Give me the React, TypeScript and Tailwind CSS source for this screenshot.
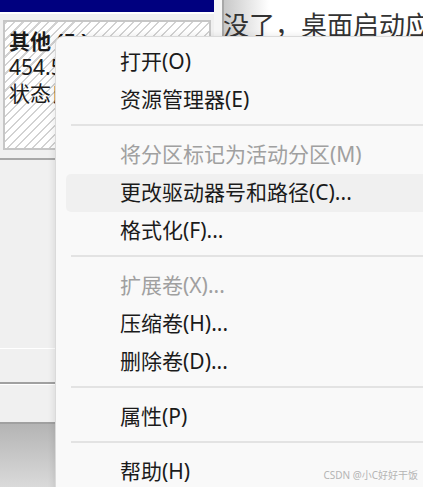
import React from "react";

type Item = { label: string; disabled?: boolean; active?: boolean } | "sep";

const items: Item[] = [
  { label: "打开(O)" },
  { label: "资源管理器(E)" },
  "sep",
  { label: "将分区标记为活动分区(M)", disabled: true },
  { label: "更改驱动器号和路径(C)...", active: true },
  { label: "格式化(F)..." },
  "sep",
  { label: "扩展卷(X)...", disabled: true },
  { label: "压缩卷(H)..." },
  { label: "删除卷(D)..." },
  "sep",
  { label: "属性(P)" },
  "sep",
  { label: "帮助(H)" },
];

const font = { fontFamily: '"Noto Sans", "Noto Sans CJK SC", sans-serif' };

export default function App() {
  return (
    <div
      className="relative flex h-[487px] w-[423px] overflow-hidden bg-[#f0f0f0] text-[#1b1b1b]"
      style={font}
    >
      {/* left pane: disk map */}
      <div className="flex w-[214px] shrink-0 flex-col">
        <div className="h-[12px] bg-[#00007f]" />
        <div className="h-[2px] bg-white" />
        <div className="px-[3px] pt-[6px]">
          <div className="h-[130px] overflow-hidden whitespace-nowrap border-2 border-[#c6c6c6] bg-[repeating-linear-gradient(135deg,#d2d2d2_0,#d2d2d2_1.5px,#ffffff_1.5px,#ffffff_6px)] px-[4px] pt-[6px] text-[21px] leading-[26px]">
            <div className="font-bold">其他 (F:)</div>
            <div>454.59 GB NTFS</div>
            <div>状态良好 (基本数据分区)</div>
          </div>
        </div>
        <div className="mt-[8px] h-[2px] bg-[#a8a8a8]" />
        <div className="h-[188px]" />
        <div className="h-px bg-white" />
        <div className="h-[33px]" />
        <div className="h-[2px] bg-[#a0a0a0]" />
        <div className="h-px bg-white" />
        <div className="h-[37px]" />
        <div className="h-[2px] bg-[#a0a0a0]" />
        <div className="flex-1 bg-[linear-gradient(180deg,#b4b4b4,#dadada)]" />
      </div>

      {/* right pane: text window behind the menu */}
      <div className="flex flex-1 flex-col">
        <div className="flex h-[40px]">
          <div className="w-[8px] bg-[#f6f6f6]" />
          <div className="w-[2px] bg-[#a8a8a8]" />
          <div className="flex-1 overflow-hidden bg-[linear-gradient(90deg,#c8c8c8,#ffffff_45px)]">
            <div
              className="-ml-[1px] whitespace-nowrap pt-[7px] text-[26px] leading-[34px] text-[#333333]"
              style={{ fontFamily: '"Noto Sans CJK SC", sans-serif' }}
            >
              没了，桌面启动应
            </div>
          </div>
        </div>
        <div className="flex-1 bg-white" />
      </div>

      {/* context menu */}
      <div className="absolute bottom-[-20px] left-[55px] right-[-20px] top-[36px] rounded-tl-[8px] border border-[#dadada] bg-[#f9f9f9] pl-[10px] pt-[6px] shadow-[-2px_-1px_6px_rgba(0,0,0,0.08)]">
        {items.map((it, i) =>
          it === "sep" ? (
            <div key={i} className="pb-[10px] pl-[5px] pt-[5px]">
              <div className="h-[2px] bg-[#e3e3e3]" />
            </div>
          ) : (
            <div
              key={i}
              className={`flex h-[38px] items-center whitespace-nowrap rounded-[5px] pl-[54px] text-[21px] ${
                it.active ? "bg-[#f0f0f0]" : ""
              } ${it.disabled ? "text-[#a0a0a0]" : "text-[#1b1b1b]"}`}
            >
              {it.label}
            </div>
          )
        )}
      </div>

      {/* watermark */}
      <div className="absolute bottom-[5px] right-[5px] text-[10px] leading-[14px] text-[#b4b4b4]">
        CSDN @小C好好干饭
      </div>
    </div>
  );
}
